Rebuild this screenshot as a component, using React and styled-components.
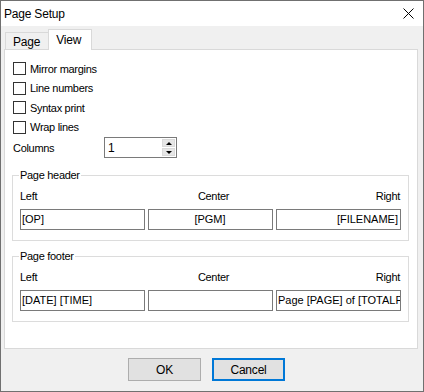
import styled, { createGlobalStyle } from 'styled-components';

const Global = createGlobalStyle`
  html, body {
    margin: 0;
    padding: 0;
    background: #f0f0f0;
  }
  * {
    box-sizing: border-box;
  }
`;

const Window = styled.div`
  width: 424px;
  height: 392px;
  border: 1px solid #707070;
  display: flex;
  flex-direction: column;
  background: #f0f0f0;
  font-family: 'Liberation Sans', Arial, sans-serif;
  font-size: 11px;
  letter-spacing: -0.3px;
  color: #000;
  overflow: hidden;
`;

const TitleBar = styled.div`
  height: 25px;
  flex: none;
  background: #fff;
  display: flex;
  align-items: center;
  justify-content: space-between;
  padding: 0 9px 0 3px;
`;

const Title = styled.span`
  font-size: 12px;
  letter-spacing: -0.2px;
`;

const Close = styled.svg`
  width: 11px;
  height: 11px;
  display: block;
`;

const Body = styled.div`
  flex: 1;
  display: flex;
  flex-direction: column;
  padding: 3px 5px 0 3px;
`;

const TabRow = styled.div`
  height: 20px;
  display: flex;
  align-items: flex-end;
  padding-left: 1px;
`;

const Tab = styled.div`
  position: relative;
  z-index: 1;
  display: flex;
  align-items: center;
  border: 1px solid #d9d9d9;
  border-bottom: none;
  height: ${p => (p.$active ? '21px' : '17px')};
  margin-bottom: ${p => (p.$active ? '-1px' : '0')};
  background: ${p => (p.$active ? '#fff' : '#f0f0f0')};
  border-right: ${p => (p.$active ? '1px solid #d9d9d9' : 'none')};
  padding: ${p => (p.$active ? '0 10px 1px 7px' : '1px 8px 0 7px')};
  font-size: 12px;
  letter-spacing: -0.2px;
`;

const Panel = styled.div`
  height: 300px;
  background: #fff;
  border: 1px solid #d9d9d9;
  padding: 9px 8px 0 7px;
  display: flex;
  flex-direction: column;
`;

const CheckRow = styled.label`
  height: 19.5px;
  display: flex;
  align-items: center;
  gap: 4px;
  margin-left: 1px;
`;

const Box = styled.span`
  width: 13px;
  height: 13px;
  border: 1px solid #333;
  background: #fff;
  flex: none;
`;

const ColumnsRow = styled.div`
  height: 21px;
  display: flex;
  align-items: center;
  margin-left: 1px;
`;

const ColumnsLabel = styled.span`
  width: 91px;
  flex: none;
`;

const Spinner = styled.div`
  width: 73px;
  height: 21px;
  border: 1px solid #7a7a7a;
  display: flex;
  align-items: center;
  justify-content: space-between;
  padding: 0 1px 0 3px;
  font-size: 12px;
`;

const SpinButtons = styled.div`
  display: flex;
  flex-direction: column;
  gap: 1px;
`;

const SpinButton = styled.div`
  width: 13px;
  height: 8px;
  background: #e6e6e6;
  border: 1px solid #dadada;
  display: flex;
  align-items: center;
  justify-content: center;
`;

const Arrow = styled.span`
  width: 0;
  height: 0;
  border-left: 3px solid transparent;
  border-right: 3px solid transparent;
  ${p => (p.$up ? 'border-bottom: 3px solid #000;' : 'border-top: 3px solid #000;')}
`;

const Group = styled.div`
  position: relative;
  height: 66px;
  border: 1px solid #dcdcdc;
  padding: 13px 7px 0 7px;
  margin-top: ${p => p.$top}px;
`;

const Legend = styled.span`
  position: absolute;
  top: -7px;
  left: 6px;
  padding: 0 1px;
  background: #fff;
  line-height: 13px;
`;

const Grid = styled.div`
  display: grid;
  grid-template-columns: 125px 125px 125px;
  column-gap: 3px;
`;

const ColLabel = styled.div`
  height: 14px;
  line-height: 14px;
  margin-bottom: 6px;
  text-align: ${p => p.$align};
  padding: ${p => (p.$align === 'right' ? '0 1px 0 0' : '0 0 0 -1px')};
  margin-left: ${p => (p.$align === 'center' ? '3px' : '0')};
  margin-right: ${p => (p.$align === 'center' ? '-3px' : '0')};
`;

const Field = styled.div`
  height: 21px;
  border: 1px solid #7a7a7a;
  background: #fff;
  line-height: 19px;
  padding: 0 2px 0 1px;
  white-space: nowrap;
  overflow: hidden;
  letter-spacing: 0;
  text-align: ${p => p.$align};
`;

const Buttons = styled.div`
  display: flex;
  gap: 11px;
  margin-top: 9px;
  padding-left: 124px;
`;

const Button = styled.div`
  width: 73px;
  height: 23px;
  display: flex;
  align-items: center;
  justify-content: center;
  background: #e1e1e1;
  border: ${p => (p.$default ? '2px solid #0078d7' : '1px solid #adadad')};
  font-size: 12px;
  letter-spacing: -0.2px;
`;

const checks = ['Mirror margins', 'Line numbers', 'Syntax print', 'Wrap lines'];

const groups = [
  { title: 'Page header', top: 17, values: ['[OP]', '[PGM]', '[FILENAME]'] },
  { title: 'Page footer', top: 15, values: ['[DATE] [TIME]', '', 'Page [PAGE] of [TOTALPAGES]'] },
];

const aligns = ['left', 'center', 'right'];
const names = ['Left', 'Center', 'Right'];

const App = () => {
  return (
    <>
      <Global />
      <Window>
        <TitleBar>
          <Title>Page Setup</Title>
          <Close viewBox="0 0 11 11">
            <path d="M0.5 0.5 L10.5 10.5 M10.5 0.5 L0.5 10.5" stroke="#000" strokeWidth="1" fill="none" />
          </Close>
        </TitleBar>
        <Body>
          <TabRow>
            <Tab>Page</Tab>
            <Tab $active>View</Tab>
          </TabRow>
          <Panel>
            {checks.map(c => (
              <CheckRow key={c}>
                <Box />
                <span>{c}</span>
              </CheckRow>
            ))}
            <ColumnsRow>
              <ColumnsLabel>Columns</ColumnsLabel>
              <Spinner>
                <span>1</span>
                <SpinButtons>
                  <SpinButton><Arrow $up /></SpinButton>
                  <SpinButton><Arrow /></SpinButton>
                </SpinButtons>
              </Spinner>
            </ColumnsRow>
            {groups.map(g => (
              <Group key={g.title} $top={g.top}>
                <Legend>{g.title}</Legend>
                <Grid>
                  {names.map((n, i) => (
                    <ColLabel key={n} $align={aligns[i]}>{n}</ColLabel>
                  ))}
                  {g.values.map((v, i) => (
                    <Field key={i} $align={aligns[i]}>{v}</Field>
                  ))}
                </Grid>
              </Group>
            ))}
          </Panel>
          <Buttons>
            <Button>OK</Button>
            <Button $default>Cancel</Button>
          </Buttons>
        </Body>
      </Window>
    </>
  );
};

export default App;
